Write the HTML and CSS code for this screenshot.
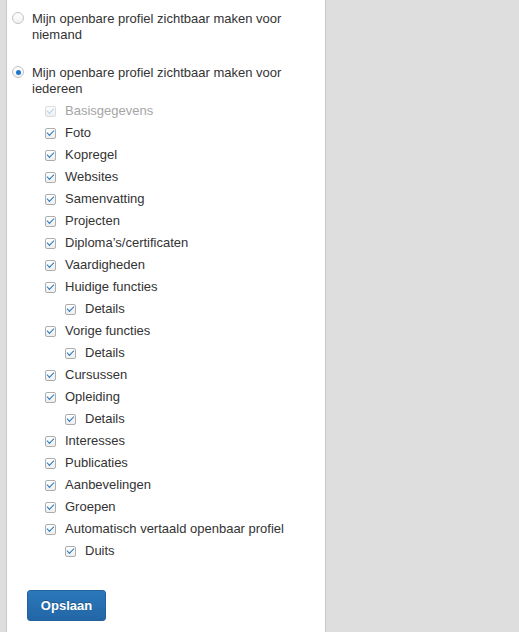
FILE: index.html
```html
<!DOCTYPE html>
<html lang="nl">
<head>
    <meta charset="UTF-8">
    <meta name="viewport" content="width=device-width, initial-scale=1.0">
    <title>Openbaar profiel</title>
    <link rel="stylesheet" href="styles.css">
</head>
<body>
    <div class="panel">
        <label class="option">
            <span class="radio"></span>
            <span class="option-text">Mijn openbare profiel zichtbaar maken voor niemand</span>
        </label>
        <label class="option">
            <span class="radio is-checked"></span>
            <span class="option-text">Mijn openbare profiel zichtbaar maken voor iedereen</span>
        </label>

        <ul class="fields">
            <li class="field is-disabled"><span class="box"></span>Basisgegevens</li>
            <li class="field"><span class="box"></span>Foto</li>
            <li class="field"><span class="box"></span>Kopregel</li>
            <li class="field"><span class="box"></span>Websites</li>
            <li class="field"><span class="box"></span>Samenvatting</li>
            <li class="field"><span class="box"></span>Projecten</li>
            <li class="field"><span class="box"></span>Diploma’s/certificaten</li>
            <li class="field"><span class="box"></span>Vaardigheden</li>
            <li class="field"><span class="box"></span>Huidige functies</li>
            <li class="field sub"><span class="box"></span>Details</li>
            <li class="field"><span class="box"></span>Vorige functies</li>
            <li class="field sub"><span class="box"></span>Details</li>
            <li class="field"><span class="box"></span>Cursussen</li>
            <li class="field"><span class="box"></span>Opleiding</li>
            <li class="field sub"><span class="box"></span>Details</li>
            <li class="field"><span class="box"></span>Interesses</li>
            <li class="field"><span class="box"></span>Publicaties</li>
            <li class="field"><span class="box"></span>Aanbevelingen</li>
            <li class="field"><span class="box"></span>Groepen</li>
            <li class="field"><span class="box"></span>Automatisch vertaald openbaar profiel</li>
            <li class="field sub"><span class="box"></span>Duits</li>
        </ul>

        <button class="button">Opslaan</button>
    </div>
</body>
</html>
```

FILE: styles.css
```css
body {
    margin: 0;
    font-family: "Liberation Sans", Arial, sans-serif;
    font-size: 13px;
    color: #333;
    background-color: #dedede;
}
.panel {
    width: 320px;
    min-height: 700px;
    margin-left: 6px;
    padding: 11px 20px 0 5px;
    box-sizing: border-box;
    background-color: #fff;
    border-left: 1px solid #c9c9c9;
    border-right: 1px solid #c9c9c9;
}
.option {
    display: flex;
    align-items: flex-start;
    line-height: 16px;
    margin-bottom: 22px;
}
.option:last-of-type {
    margin-bottom: 0;
}
.radio {
    position: relative;
    flex: none;
    width: 12px;
    height: 12px;
    margin: 1px 8px 0 0;
    box-sizing: border-box;
    border: 1px solid #c3c3c3;
    border-radius: 50%;
    background: linear-gradient(#fff, #f1f1f1);
}
.radio.is-checked::after {
    content: "";
    position: absolute;
    top: 2.5px;
    left: 2.5px;
    width: 5px;
    height: 5px;
    border-radius: 50%;
    background-color: #1d78cc;
}
.fields {
    list-style: none;
    margin: 3px 0 0;
    padding: 0 0 0 33px;
}
.field {
    display: flex;
    align-items: center;
    height: 22px;
    line-height: 22px;
}
.field.sub {
    padding-left: 20px;
}
.field.is-disabled {
    color: #a5a5a5;
}
.box {
    position: relative;
    flex: none;
    width: 11px;
    height: 11px;
    margin: 1px 9px 0 0;
    box-sizing: border-box;
    border: 1px solid #adadad;
    border-radius: 2px;
    background: linear-gradient(#fff, #eeeeee);
}
.box::after {
    content: "";
    position: absolute;
    top: 1px;
    left: 1px;
    width: 6px;
    height: 3px;
    border-left: 1.5px solid #2877bd;
    border-bottom: 1.5px solid #2877bd;
    transform: rotate(-45deg);
}
.is-disabled .box {
    border-color: #dcdcdc;
}
.is-disabled .box::after {
    border-color: #b9d3ea;
}
.button {
    display: block;
    width: 79px;
    height: 31px;
    margin: 28px 0 0 15px;
    padding: 0;
    font-family: "Liberation Sans", Arial, sans-serif;
    font-size: 13px;
    font-weight: bold;
    color: #fff;
    text-shadow: 0 -1px 0 rgba(0, 0, 0, 0.25);
    background: linear-gradient(#2b78ba, #2366a6);
    border: 1px solid #22639f;
    border-radius: 3px;
    cursor: pointer;
}
```
